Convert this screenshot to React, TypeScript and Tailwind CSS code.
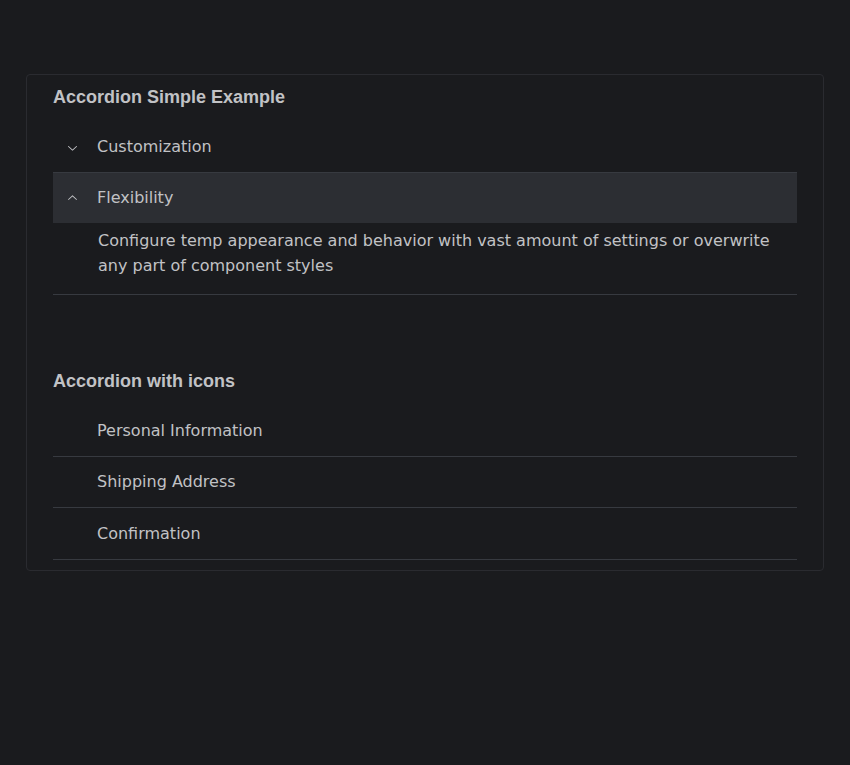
import React from "react";

const Chevron = ({ up }: { up?: boolean }) => (
  <svg width="15" height="15" viewBox="0 0 15 15" fill="none" className={up ? "rotate-180" : ""}>
    <path
      d="M3.13523 6.15803C3.3241 5.95657 3.64052 5.94637 3.84197 6.13523L7.5 9.56464L11.158 6.13523C11.3595 5.94637 11.6759 5.95657 11.8648 6.15803C12.0536 6.35949 12.0434 6.67591 11.842 6.86477L7.84197 10.6148C7.64964 10.7951 7.35036 10.7951 7.15803 10.6148L3.15803 6.86477C2.95657 6.67591 2.94637 6.35949 3.13523 6.15803Z"
      fill="currentColor"
      fillRule="evenodd"
      clipRule="evenodd"
    />
  </svg>
);

const body = { fontFamily: '"DejaVu Sans", sans-serif' };
const head = { fontFamily: '"Liberation Sans", Arial, sans-serif' };

export default function App() {
  return (
    <div className="min-h-[765px] bg-[#1a1b1e] pt-[74px] px-[26px] text-[#c1c2c5]" style={body}>
      <div className="rounded-[4px] border border-[#2a2b30] bg-[#1a1b1e] px-[26px] pt-2 pb-[10px]">
        <h2 className="text-[18px] leading-[28px] font-bold text-[#c1c2c5]" style={head}>
          Accordion Simple Example
        </h2>
        <div className="mt-[10.5px]">
          <div className="border-b border-[#373a40]">
            <div className="flex h-[50.5px] items-center pl-3 pt-[1px]">
              <span className="flex w-[15px] justify-center text-[#c1c2c5]">
                <Chevron />
              </span>
              <span className="ml-[17px] text-[16px]">Customization</span>
            </div>
          </div>
          <div className="border-b border-[#373a40]">
            <div className="flex h-[50px] items-center bg-[#2c2e33] pl-3">
              <span className="flex w-[15px] justify-center text-[#c1c2c5]">
                <Chevron up />
              </span>
              <span className="ml-[17px] text-[16px]">Flexibility</span>
            </div>
            <div className="pl-[45px] pr-4 pt-[5px] pb-[16px] text-[16px] leading-[25px]">
              Configure temp appearance and behavior with vast amount of settings or overwrite any part of component styles
            </div>
          </div>
        </div>

        <h2 className="mt-[72px] text-[18px] leading-[28px] font-bold text-[#c1c2c5]" style={head}>
          Accordion with icons
        </h2>
        <div className="mt-[10px]">
          {["Personal Information", "Shipping Address", "Confirmation"].map((t) => (
            <div key={t} className="border-b border-[#373a40]">
              <div className="flex h-[50.5px] items-center pl-[44px] pt-[1px]">
                <span className="text-[16px]">{t}</span>
              </div>
            </div>
          ))}
        </div>
      </div>
    </div>
  );
}
